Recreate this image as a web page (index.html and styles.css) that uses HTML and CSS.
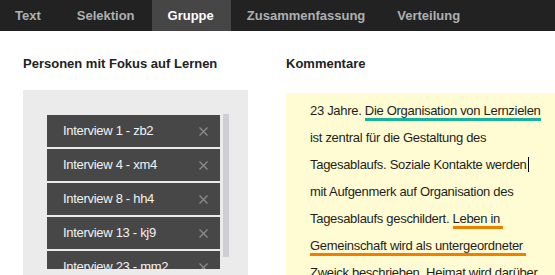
FILE: index.html
```html
<!DOCTYPE html>
<html lang="de">
<head>
<meta charset="utf-8">
<title>Gruppe</title>
<link rel="stylesheet" href="styles.css">
</head>
<body>
<nav class="tabs">
  <span class="tab tab-first">Text</span>
  <span class="tab tab-second">Selektion</span>
  <span class="tab active">Gruppe</span>
  <span class="tab">Zusammenfassung</span>
  <span class="tab">Verteilung</span>
</nav>
<main class="content">
  <section class="col-left">
    <h2 class="heading">Personen mit Fokus auf Lernen</h2>
    <div class="panel">
      <div class="list-wrap">
        <ul class="list">
          <li class="item"><span>Interview 1 - zb2</span><svg class="x" viewBox="0 0 9 9"><path d="M0.5 0.5L8.5 8.5M8.5 0.5L0.5 8.5"/></svg></li>
          <li class="item"><span>Interview 4 - xm4</span><svg class="x" viewBox="0 0 9 9"><path d="M0.5 0.5L8.5 8.5M8.5 0.5L0.5 8.5"/></svg></li>
          <li class="item"><span>Interview 8 - hh4</span><svg class="x" viewBox="0 0 9 9"><path d="M0.5 0.5L8.5 8.5M8.5 0.5L0.5 8.5"/></svg></li>
          <li class="item"><span>Interview 13 - kj9</span><svg class="x" viewBox="0 0 9 9"><path d="M0.5 0.5L8.5 8.5M8.5 0.5L0.5 8.5"/></svg></li>
          <li class="item"><span>Interview 23 - mm2</span><svg class="x" viewBox="0 0 9 9"><path d="M0.5 0.5L8.5 8.5M8.5 0.5L0.5 8.5"/></svg></li>
        </ul>
        <div class="thumb"></div>
      </div>
    </div>
  </section>
  <section class="col-right">
    <h2 class="heading">Kommentare</h2>
    <div class="note">
      <p class="note-text">23 Jahre. <span class="mark-teal">Die Organisation von Lernzielen</span><br>ist zentral für die Gestaltung des<br>Tagesablaufs. Soziale Kontakte werden<span class="caret"></span><br>mit Aufgenmerk auf Organisation des<br>Tagesablaufs geschildert. <span class="mark-orange">Leben in&nbsp;<br>Gemeinschaft wird als untergeordneter&nbsp;</span><br>Zweick beschrieben. Heimat wird darüber</p>
    </div>
  </section>
</main>
</body>
</html>
```
FILE: styles.css
```css
html, body {
  margin: 0;
  padding: 0;
  background: #ffffff;
  overflow: hidden;
  font-family: "Liberation Sans", Arial, sans-serif;
}

.tabs {
  display: flex;
  height: 31px;
  background: #222222;
}

.tab {
  padding: 0 16px;
  line-height: 31px;
  font-size: 13px;
  font-weight: bold;
  color: #adb0b3;
  white-space: nowrap;
}

.tab-first {
  padding-left: 15px;
  padding-right: 20px;
}

.tab-second {
  padding-right: 17px;
}

.tab.active {
  background: #464646;
  color: #ffffff;
  padding-right: 17px;
}

.content {
  display: flex;
  padding-left: 23px;
  height: 244px;
  overflow: hidden;
}

.col-left {
  width: 225px;
  flex: none;
}

.col-right {
  margin-left: 38px;
  flex: 1;
  min-width: 0;
}

.heading {
  margin: 25px 0 0;
  font-size: 13px;
  line-height: 15px;
  font-weight: bold;
  color: #222222;
}

.panel {
  margin-top: 19px;
  height: 185px;
  background: #ebebeb;
  padding: 25px 19px 0 24px;
  box-sizing: border-box;
}

.list-wrap {
  display: flex;
  align-items: flex-start;
  gap: 3px;
}

.list {
  list-style: none;
  margin: 0;
  padding: 0;
  width: 173px;
  height: 154px;
  overflow: hidden;
  display: flex;
  flex-direction: column;
  gap: 2px;
}

.item {
  flex: none;
  height: 32px;
  background: #474747;
  color: #f2f2f2;
  font-size: 13px;
  letter-spacing: -0.3px;
  line-height: 32px;
  padding: 0 12px 0 16px;
  display: flex;
  align-items: center;
  justify-content: space-between;
}

.x {
  width: 9px;
  height: 9px;
  stroke: #8c8c8c;
  stroke-width: 1.3;
  fill: none;
}

.thumb {
  width: 6px;
  height: 143px;
  margin-top: -1px;
  background: #d0ced4;
}

.note {
  margin-top: 22px;
  height: 182px;
  background: #fffcd3;
  padding: 4px 0 0 24px;
  box-sizing: border-box;
  overflow: hidden;
}

.note-text {
  margin: 0;
  font-size: 13px;
  letter-spacing: -0.3px;
  line-height: 27px;
  color: #1e1e1e;
  white-space: nowrap;
}

.mark-teal {
  border-bottom: 3px solid #14b39a;
}

.mark-orange {
  border-bottom: 3px solid #f07f00;
}

.caret {
  display: inline-block;
  width: 0;
  height: 15px;
  border-left: 1px solid #000000;
  margin-left: 1px;
  vertical-align: -3px;
}
```
